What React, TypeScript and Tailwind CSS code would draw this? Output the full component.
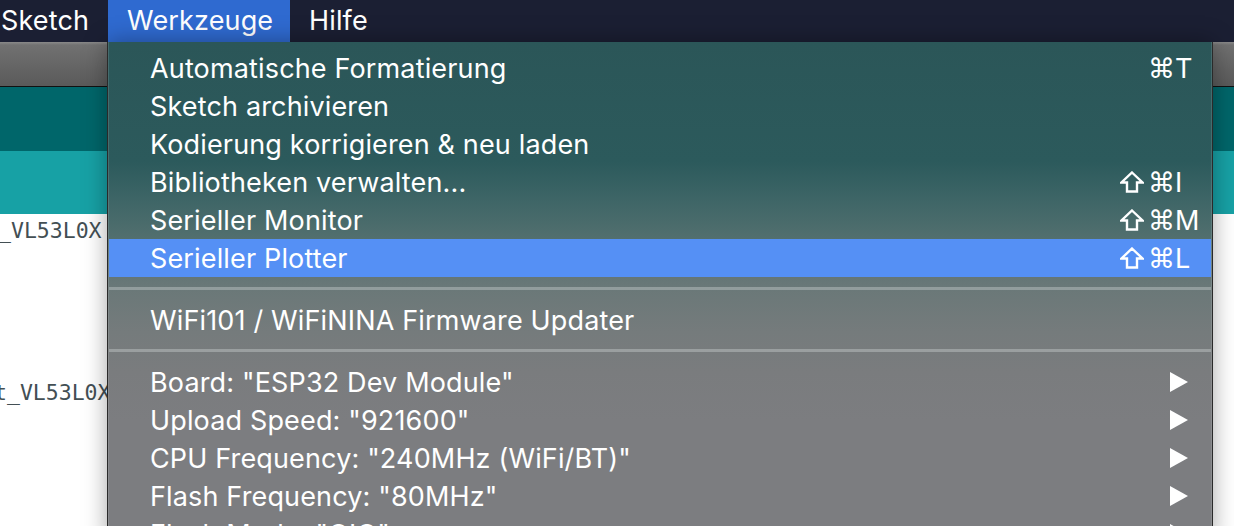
import React from "react";

type Item =
  | { kind: "item"; label: string; shift?: boolean; keyChar?: string; sub?: boolean; active?: boolean }
  | { kind: "sep" };

const items: Item[] = [
  { kind: "item", label: "Automatische Formatierung", keyChar: "T" },
  { kind: "item", label: "Sketch archivieren" },
  { kind: "item", label: "Kodierung korrigieren & neu laden" },
  { kind: "item", label: "Bibliotheken verwalten...", shift: true, keyChar: "I" },
  { kind: "item", label: "Serieller Monitor", shift: true, keyChar: "M" },
  { kind: "item", label: "Serieller Plotter", shift: true, keyChar: "L", active: true },
  { kind: "sep" },
  { kind: "item", label: "WiFi101 / WiFiNINA Firmware Updater" },
  { kind: "sep" },
  { kind: "item", label: 'Board: "ESP32 Dev Module"', sub: true },
  { kind: "item", label: 'Upload Speed: "921600"', sub: true },
  { kind: "item", label: 'CPU Frequency: "240MHz (WiFi/BT)"', sub: true },
  { kind: "item", label: 'Flash Frequency: "80MHz"', sub: true },
  { kind: "item", label: 'Flash Mode: "QIO"', sub: true },
];

function Triangle() {
  return (
    <svg width="18" height="20" viewBox="0 0 18 20" className="block">
      <polygon points="0,0 18,10 0,20" fill="#ffffff" />
    </svg>
  );
}

function ShiftIcon() {
  return (
    <svg width="24" height="22" viewBox="0 0 24 22" className="block">
      <polygon
        points="12,1.5 22.5,11.5 17,11.5 17,20.5 7,20.5 7,11.5 1.5,11.5"
        fill="none"
        stroke="#ffffff"
        strokeWidth="2.4"
        strokeLinejoin="miter"
      />
    </svg>
  );
}

function Shortcut({ shift, keyChar }: { shift?: boolean; keyChar: string }) {
  return (
    <span className="flex w-[80px] items-center leading-none">
      <span className="flex w-[28px]">{shift ? <ShiftIcon /> : null}</span>
      <span className="w-[27px] font-['DejaVu_Sans',sans-serif] text-[27px] leading-none">⌘</span>
      <span className="font-['Inter',sans-serif] text-[27px] leading-none">{keyChar}</span>
    </span>
  );
}

export default function App() {
  return (
    <div className="relative w-[1234px] h-[526px] overflow-hidden bg-white font-['Inter','Noto_Sans',sans-serif]">
      {/* Menu bar */}
      <div className="flex h-[42px] items-stretch bg-[#1b1f33] text-white text-[27px] leading-none tracking-[0.15px]">
        <div className="flex items-center pl-[1px] pb-[2px] w-[108px]">Sketch</div>
        <div className="flex items-center bg-[#2f6ad0] px-[19px] pb-[2px] w-[182px]">Werkzeuge</div>
        <div className="flex items-center pl-[19px] pb-[2px]">Hilfe</div>
      </div>

      {/* Background app */}
      <div className="flex flex-col">
        <div className="h-[45px] bg-[linear-gradient(#8a8a8a_0px,#717171_3px,#5a5a5a_100%)] border-b border-[#111]" />
        <div className="h-[64px] bg-[#00666a]" />
        <div className="h-[63px] bg-[#17a1a5]" />
        <div className="flex flex-col bg-white font-['DejaVu_Sans_Mono',monospace] text-[21.5px] text-[#434f54] leading-none">
          <div className="pt-[6px] ml-[-2px]">_VL53L0X</div>
          <div className="pt-[140px] ml-[-6px]">t_VL53L0X</div>
        </div>
      </div>

      {/* Dropdown */}
      <div className="absolute left-[107px] top-[42px] w-[1106px] h-[500px] border-x border-[#2a2a2a] shadow-[0_0_22px_rgba(0,0,0,0.35)] bg-[linear-gradient(180deg,#2b5658_0%,#2c5a5c_24%,#3f6667_32%,#54706f_40%,#6a7878_49%,#757b7c_58%,#7a7c7e_66%,#7c7d80_76%,#7c7d80_100%)]">
        <div className="h-full border-x border-[rgba(255,255,255,0.12)] pt-[7px] text-white text-[27px] tracking-[0.15px]">
          {items.map((it, i) =>
            it.kind === "sep" ? (
              <div key={i} className="h-[24px] pt-[10px]">
                <div className="h-[3px] bg-[rgba(220,225,225,0.35)]" />
              </div>
            ) : (
              <div
                key={i}
                className={
                  "flex h-[38px] items-center justify-between pl-[41px] " +
                  (it.sub ? "pr-[23px] " : "pr-[11px] ") +
                  (it.active ? "bg-[#5590f5]" : "")
                }
              >
                <span className="leading-none">{it.label}</span>
                {it.keyChar ? <Shortcut shift={it.shift} keyChar={it.keyChar} /> : null}
                {it.sub ? <Triangle /> : null}
              </div>
            )
          )}
        </div>
      </div>
    </div>
  );
}
